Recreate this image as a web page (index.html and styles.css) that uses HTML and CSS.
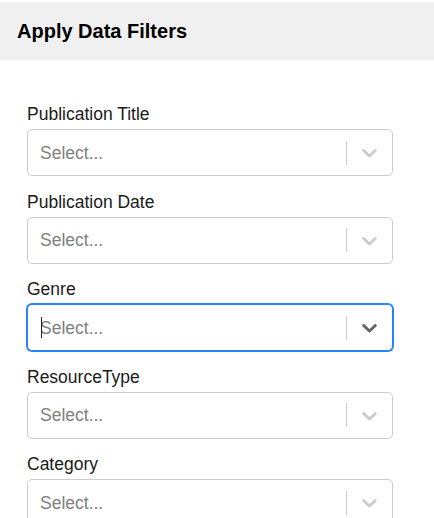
FILE: index.html
```html
<!DOCTYPE html>
<html>
<head>
<meta charset="utf-8">
<link rel="stylesheet" href="styles.css">
</head>
<body>
<div class="header"><h1 class="title">Apply Data Filters</h1></div>
<div class="form">
  <div class="field">
    <label class="label">Publication Title</label>
    <div class="control">
      <div class="value"><span class="placeholder">Select...</span></div>
      <div class="indicators"><span class="sep"></span><span class="dd"><svg viewBox="0 0 20 20" width="25" height="25"><path d="M4.516 7.548c0.436-0.446 1.043-0.481 1.576 0l3.908 3.747 3.908-3.747c0.533-0.481 1.141-0.446 1.574 0 0.436 0.445 0.408 1.197 0 1.615-0.406 0.418-4.695 4.502-4.695 4.502-0.217 0.223-0.502 0.335-0.787 0.335s-0.57-0.112-0.789-0.335c0 0-4.287-4.084-4.695-4.502s-0.436-1.17 0-1.615z"/></svg></span></div>
    </div>
  </div>
  <div class="field">
    <label class="label">Publication Date</label>
    <div class="control">
      <div class="value"><span class="placeholder">Select...</span></div>
      <div class="indicators"><span class="sep"></span><span class="dd"><svg viewBox="0 0 20 20" width="25" height="25"><path d="M4.516 7.548c0.436-0.446 1.043-0.481 1.576 0l3.908 3.747 3.908-3.747c0.533-0.481 1.141-0.446 1.574 0 0.436 0.445 0.408 1.197 0 1.615-0.406 0.418-4.695 4.502-4.695 4.502-0.217 0.223-0.502 0.335-0.787 0.335s-0.57-0.112-0.789-0.335c0 0-4.287-4.084-4.695-4.502s-0.436-1.17 0-1.615z"/></svg></span></div>
    </div>
  </div>
  <div class="field">
    <label class="label">Genre</label>
    <div class="control focused">
      <div class="value"><span class="caret"></span><span class="placeholder">Select...</span></div>
      <div class="indicators"><span class="sep"></span><span class="dd"><svg viewBox="0 0 20 20" width="25" height="25"><path d="M4.516 7.548c0.436-0.446 1.043-0.481 1.576 0l3.908 3.747 3.908-3.747c0.533-0.481 1.141-0.446 1.574 0 0.436 0.445 0.408 1.197 0 1.615-0.406 0.418-4.695 4.502-4.695 4.502-0.217 0.223-0.502 0.335-0.787 0.335s-0.57-0.112-0.789-0.335c0 0-4.287-4.084-4.695-4.502s-0.436-1.17 0-1.615z"/></svg></span></div>
    </div>
  </div>
  <div class="field">
    <label class="label">ResourceType</label>
    <div class="control">
      <div class="value"><span class="placeholder">Select...</span></div>
      <div class="indicators"><span class="sep"></span><span class="dd"><svg viewBox="0 0 20 20" width="25" height="25"><path d="M4.516 7.548c0.436-0.446 1.043-0.481 1.576 0l3.908 3.747 3.908-3.747c0.533-0.481 1.141-0.446 1.574 0 0.436 0.445 0.408 1.197 0 1.615-0.406 0.418-4.695 4.502-4.695 4.502-0.217 0.223-0.502 0.335-0.787 0.335s-0.57-0.112-0.789-0.335c0 0-4.287-4.084-4.695-4.502s-0.436-1.17 0-1.615z"/></svg></span></div>
    </div>
  </div>
  <div class="field">
    <label class="label">Category</label>
    <div class="control">
      <div class="value"><span class="placeholder">Select...</span></div>
      <div class="indicators"><span class="sep"></span><span class="dd"><svg viewBox="0 0 20 20" width="25" height="25"><path d="M4.516 7.548c0.436-0.446 1.043-0.481 1.576 0l3.908 3.747 3.908-3.747c0.533-0.481 1.141-0.446 1.574 0 0.436 0.445 0.408 1.197 0 1.615-0.406 0.418-4.695 4.502-4.695 4.502-0.217 0.223-0.502 0.335-0.787 0.335s-0.57-0.112-0.789-0.335c0 0-4.287-4.084-4.695-4.502s-0.436-1.17 0-1.615z"/></svg></span></div>
    </div>
  </div>
</div>
</body>
</html>
```
FILE: styles.css
```css
html, body {
  margin: 0;
  padding: 0;
  background: #fff;
  font-family: "Liberation Sans", Arial, sans-serif;
}
body {
  padding-top: 2px;
  overflow: hidden;
}
.header {
  background: #f0f0f0;
  height: 58px;
  display: flex;
  align-items: center;
  padding-left: 17px;
}
.title {
  margin: 0;
  font-size: 20px;
  font-weight: bold;
  color: #000;
  line-height: 24px;
}
.form {
  width: 366px;
  margin-left: 27px;
  padding-top: 44px;
  display: flex;
  flex-direction: column;
  gap: 15.5px;
}
.field {
  display: flex;
  flex-direction: column;
  gap: 5px;
}
.label {
  font-size: 17.5px;
  line-height: 20px;
  color: #1a1a1a;
}
.control {
  box-sizing: border-box;
  height: 47px;
  border: 1px solid #ccc;
  border-radius: 5px;
  display: flex;
  align-items: center;
  background: #fff;
}
.control.focused {
  border-color: #2684ff;
  box-shadow: 0 0 0 1px #2684ff;
}
.value {
  flex: 1;
  position: relative;
  padding: 0 12px;
  display: flex;
  align-items: center;
}
.placeholder {
  font-size: 17.5px;
  color: #808080;
  line-height: 22px;
}
.caret {
  position: absolute;
  left: 13px;
  top: 0;
  width: 1px;
  height: 21px;
  background: #222;
}
.indicators {
  display: flex;
  align-items: center;
  align-self: stretch;
}
.sep {
  width: 1px;
  height: 24px;
  background: #ccc;
}
.dd {
  width: 45px;
  display: flex;
  justify-content: center;
  align-items: center;
}
.dd svg {
  fill: #ccc;
  display: block;
}
.focused .dd svg {
  fill: #666;
}
```
